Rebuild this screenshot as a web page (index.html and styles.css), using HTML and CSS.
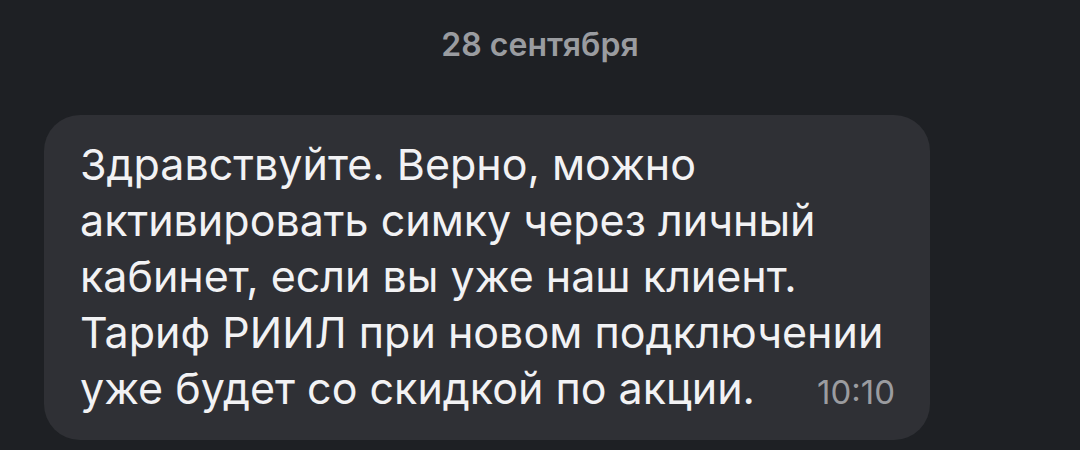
FILE: index.html
```html
<!DOCTYPE html>
<html lang="ru">
<head>
<meta charset="utf-8">
<link rel="stylesheet" href="styles.css">
</head>
<body>
<div class="chat">
  <div class="date">28 сентября</div>
  <div class="bubble">
    <div class="text">Здравствуйте. Верно, можно<br>активировать симку через личный<br>кабинет, если вы уже наш клиент.<br>Тариф РИИЛ при новом подключении</div>
    <div class="last">
      <span class="text">уже будет со скидкой по акции.</span>
      <span class="time">10:10</span>
    </div>
  </div>
</div>
</body>
</html>
```
FILE: styles.css
```css
html, body {
  margin: 0;
  padding: 0;
  background: #1e2024;
  width: 1080px;
  height: 450px;
  overflow: hidden;
}
.chat {
  font-family: Inter, "Noto Sans", sans-serif;
  display: flex;
  flex-direction: column;
  padding: 0 0 0 44px;
}
.date {
  color: #9a9ca0;
  font-size: 32px;
  font-weight: 600;
  text-align: center;
  width: 992px;
  padding-top: 25px;
  height: 115px;
  box-sizing: border-box;
  line-height: 40px;
}
.bubble {
  width: 886px;
  box-sizing: border-box;
  background: #2f3035;
  border-radius: 36px;
  padding: 21px 35px 24px 36px;
}
.text {
  color: #f2f2f4;
  font-size: 43px;
  line-height: 56px;
}
.last {
  display: flex;
  align-items: baseline;
  gap: 40px;
}
.time {
  color: #9b9ca0;
  font-size: 33px;
  margin-left: auto;
}
```
